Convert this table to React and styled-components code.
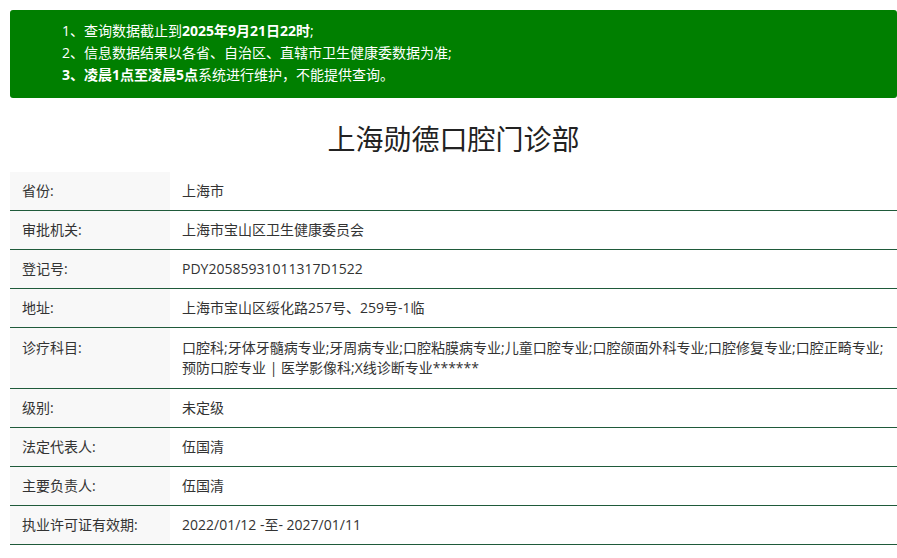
import React from "react";
import styled, { createGlobalStyle } from "styled-components";

const Global = createGlobalStyle`
  html, body { margin: 0; padding: 0; background: #fff; }
  body {
    font-family: "Open Sans", "Noto Sans CJK SC", sans-serif;
    color: #333;
    overflow: hidden;
  }
`;

const Page = styled.div`
  padding: 10px 0 0 10px;
  width: 887px;
`;

const Notice = styled.div`
  background: #007f00;
  border-radius: 3px;
  padding: 10px 0 12px 52px;
  color: #fff;
  font-size: 14px;
  line-height: 22px;
`;

const NoticeLine = styled.div`
  white-space: nowrap;
`;

const Strong = styled.b`
  font-weight: 700;
`;

const Title = styled.h1`
  margin: 0;
  padding: 22px 0 13px;
  text-align: center;
  font-size: 28px;
  font-weight: 400;
  line-height: 39px;
  color: #222;
`;

const Table = styled.div`
  display: flex;
  flex-direction: column;
`;

const Row = styled.div`
  display: grid;
  grid-template-columns: 160px 1fr;
  border-bottom: 1px solid #1f5a3a;
  font-size: 14px;
  line-height: 20px;
`;

const Label = styled.div`
  background: #f8f8f8;
  padding: ${(p) => (p.$tall ? "10px" : "9px")} 12px;
  color: #333;
`;

const Value = styled.div`
  padding: ${(p) => (p.$tall ? "10px" : "9px")} 12px;
  color: #333;
`;

const rows = [
  ["省份:", "上海市"],
  ["审批机关:", "上海市宝山区卫生健康委员会"],
  ["登记号:", "PDY20585931011317D1522"],
  ["地址:", "上海市宝山区绥化路257号、259号-1临"],
  [
    "诊疗科目:",
    "口腔科;牙体牙髓病专业;牙周病专业;口腔粘膜病专业;儿童口腔专业;口腔颌面外科专业;口腔修复专业;口腔正畸专业;预防口腔专业 | 医学影像科;X线诊断专业******",
    true,
  ],
  ["级别:", "未定级"],
  ["法定代表人:", "伍国清"],
  ["主要负责人:", "伍国清"],
  ["执业许可证有效期:", "2022/01/12 -至- 2027/01/11"],
];

export default function App() {
  return (
    <Page>
      <Global />
      <Notice>
        <NoticeLine>
          1、查询数据截止到<Strong>2025年9月21日22时</Strong>;
        </NoticeLine>
        <NoticeLine>2、信息数据结果以各省、自治区、直辖市卫生健康委数据为准;</NoticeLine>
        <NoticeLine>
          <Strong>3、凌晨1点至凌晨5点</Strong>系统进行维护，不能提供查询。
        </NoticeLine>
      </Notice>
      <Title>上海勋德口腔门诊部</Title>
      <Table>
        {rows.map(([k, v, tall]) => (
          <Row key={k}>
            <Label $tall={tall}>{k}</Label>
            <Value $tall={tall}>{v}</Value>
          </Row>
        ))}
      </Table>
    </Page>
  );
}
